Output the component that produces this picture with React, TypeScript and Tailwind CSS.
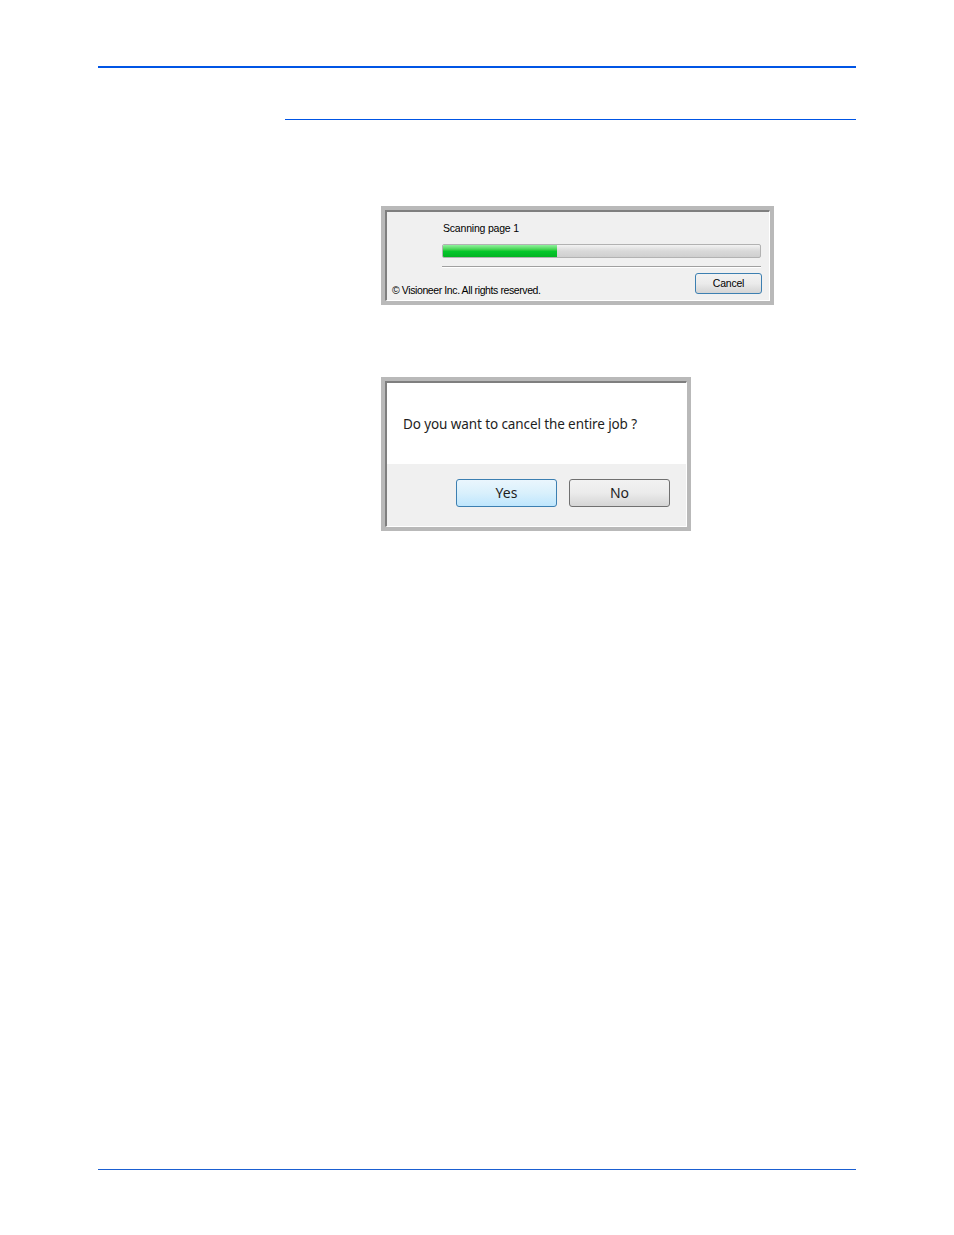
import React from "react";

function Frame({ children, className }: { children: React.ReactNode; className?: string }) {
	return (
		<div className={"border-4 border-[#b9b9b9] " + (className || "")}>
			<div className="border-t-2 border-l-2 border-[#7f7f7f] border-r border-b border-r-white border-b-white">
				{children}
			</div>
		</div>
	);
}

function ScanDialog() {
	return (
		<Frame className="w-[393px]">
			<div className="bg-[#f0f0f0] h-[88px] font-['Liberation_Sans',sans-serif] text-[10.5px] text-black tracking-[-0.2px]">
				<div className="pl-[56px] pt-[10px] leading-[12px]">Scanning page 1</div>
				<div className="ml-[55px] mt-[10px] w-[319px] h-[14px] border border-[#b2b2b2] rounded-[2px] bg-gradient-to-b from-[#f3f3f3] via-[#d9d9d9] to-[#cfcfcf] overflow-hidden">
					<div className="h-full w-[114px] bg-gradient-to-b from-[#8ef29d] via-[#06c92c] to-[#03b422]" />
				</div>
				<div className="ml-[55px] mt-[8px] w-[319px] h-px bg-[#a0a0a0] border-b border-white box-content" />
				<div className="flex items-end justify-between pl-[5px] pr-[7px] mt-[5px]">
					<div className="leading-[12px] tracking-[-0.4px] translate-y-[2px]">© Visioneer Inc. All rights reserved.</div>
					<button className="w-[67px] h-[21px] border border-[#3c7fb1] rounded-[3px] bg-gradient-to-b from-[#f2f2f2] via-[#ebebeb] to-[#d4d4d4] text-[10.5px] leading-none">
						Cancel
					</button>
				</div>
			</div>
		</Frame>
	);
}

function CancelDialog() {
	return (
		<Frame className="w-[310px]">
			<div className="font-['Noto_Sans',sans-serif] text-[#1e1e1e]">
				<div className="bg-white h-[81px] pl-[16px] pt-[32px] leading-[18px] text-[13.5px] tracking-[-0.1px]">
					Do you want to cancel the entire job ?
				</div>
				<div className="bg-[#f0f0f0] h-[62px] flex justify-end gap-[12px] pr-[16px] pt-[15px]">
					<button className="w-[101px] h-[28px] rounded-[3px] border border-[#3c7fb1] bg-gradient-to-b from-[#eaf6fd] via-[#d9f0fc] to-[#bee6fd] text-[14px] leading-none">
						Yes
					</button>
					<button className="w-[101px] h-[28px] rounded-[3px] border border-[#707070] bg-gradient-to-b from-[#f2f2f2] via-[#ebebeb] to-[#d5d5d5] text-[14px] leading-none">
						No
					</button>
				</div>
			</div>
		</Frame>
	);
}

export default function App() {
	return (
		<div className="w-[954px] h-[1235px] bg-white flex flex-col">
			<div className="mt-[66px] ml-[98px] w-[758px] h-[2px] bg-[#0055e5]" />
			<div className="mt-[51px] ml-[285px] w-[571px] h-px bg-[#0055e5]" />
			<div className="mt-[86px] ml-[381px]">
				<ScanDialog />
			</div>
			<div className="mt-[72px] ml-[381px]">
				<CancelDialog />
			</div>
			<div className="mt-auto mb-[65px] ml-[98px] w-[758px] h-px bg-[#1a5fd1]" />
		</div>
	);
}
